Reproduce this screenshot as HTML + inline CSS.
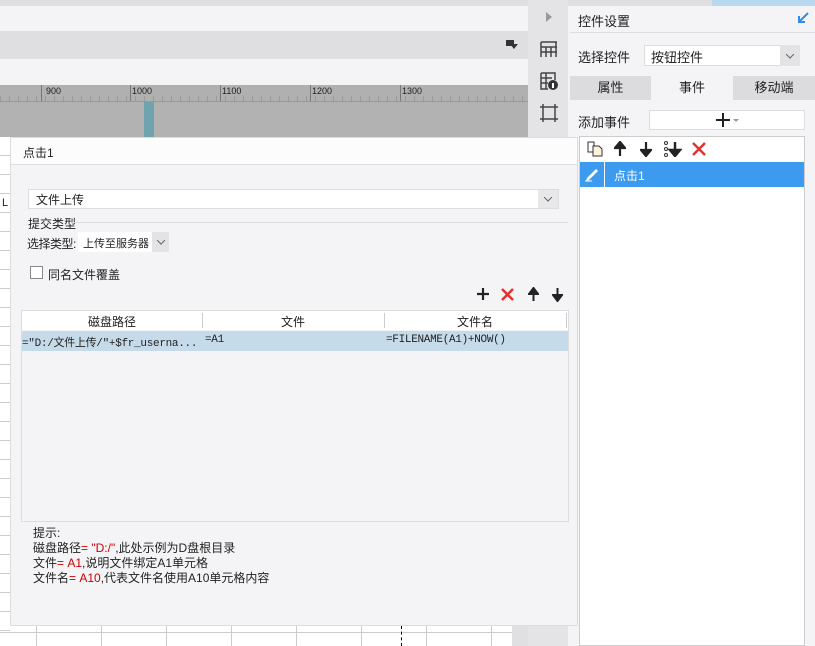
<!DOCTYPE html>
<html><head><meta charset="utf-8"><style>
*{box-sizing:border-box;margin:0;padding:0}
body{width:815px;height:646px;overflow:hidden;position:relative;background:#fff;font-family:"Liberation Sans","Noto Sans CJK SC",sans-serif;font-size:12px;color:#222}
.a{position:absolute}
.mono{font-family:"Liberation Mono","Noto Sans CJK SC",monospace;letter-spacing:-0.3px}
.chev{position:absolute;background:#e3e3e5}
.chev:after{content:"";position:absolute;left:50%;top:50%;width:5px;height:5px;border-right:1px solid #666;border-bottom:1px solid #666;transform:translate(-50%,-75%) rotate(45deg)}
</style></head><body>
<div class="a" style="left:0;top:0;width:528px;height:6px;background:#e0e0e2"></div>
<div class="a" style="left:0;top:6px;width:528px;height:25px;background:#f4f4f6"></div>
<div class="a" style="left:0;top:31px;width:528px;height:28px;background:#dfdfe1"></div>
<div class="a" style="left:506px;top:40px;width:8px;height:6px;background:#333"></div>
<div class="a" style="left:510px;top:44px;border:4px solid transparent;border-top:5px solid #333"></div>
<div class="a" style="left:0;top:59px;width:528px;height:26px;background:#f4f4f6"></div>
<div class="a" style="left:0;top:85px;width:528px;height:17px;background:#b0b0b0;border-bottom:1px solid #999"></div>
<div class="a" style="left:0;top:102px;width:528px;height:35px;background:#b2b2b2"></div>
<div class="a" style="left:144px;top:102px;width:10px;height:35px;background:#6fa3ae"></div>
<div class="a" style="left:41px;top:85px;height:16px;border-left:1px solid #777"></div><div class="a" style="left:46px;top:86px;font-size:9px">900</div>
<div class="a" style="left:130px;top:85px;height:16px;border-left:1px solid #777"></div><div class="a" style="left:132px;top:86px;font-size:9px">1000</div>
<div class="a" style="left:220px;top:85px;height:16px;border-left:1px solid #777"></div><div class="a" style="left:222px;top:86px;font-size:9px">1100</div>
<div class="a" style="left:310px;top:85px;height:16px;border-left:1px solid #777"></div><div class="a" style="left:312px;top:86px;font-size:9px">1200</div>
<div class="a" style="left:400px;top:85px;height:16px;border-left:1px solid #777"></div><div class="a" style="left:402px;top:86px;font-size:9px">1300</div>
<div class="a" style="left:0;top:96px;width:528px;height:5px;background:repeating-linear-gradient(90deg,#999 0 1px,transparent 1px 9px)"></div>
<div class="a" style="left:0;top:137px;width:10px;height:509px;background:repeating-linear-gradient(180deg,transparent 0 18px,#ccc 18px 19px)"></div>
<div class="a" style="left:2px;top:197px;font-size:11px">L</div>
<div class="a" style="left:0;top:626px;width:512px;height:20px;background:repeating-linear-gradient(90deg,transparent 0 36px,#ccc 36px 37px,transparent 37px 65px)"></div>
<div class="a" style="left:0;top:632px;width:512px;height:1px;background:#ccc"></div>
<div class="a" style="left:401px;top:626px;height:20px;border-left:1px dashed #000"></div>
<div class="a" style="left:512px;top:626px;width:16px;height:20px;background:#e0e0e2"></div>
<div class="a" style="left:528px;top:0;width:40px;height:646px;background:#e4e4e6"></div>
<div class="a" style="left:568px;top:0;width:10px;height:646px;background:#f4f4f6"></div>
<div class="a" style="left:546px;top:12px;border:5px solid transparent;border-left:6px solid #999;border-right:0"></div>
<svg class="a" style="left:540px;top:40px" width="18" height="18"><path d="M1 2H17M1 2V17M1 7H17M6 7V17M11 7V17M16 2V17M1 12H17" stroke="#444" stroke-width="1.5" fill="none"/></svg>
<svg class="a" style="left:540px;top:72px" width="18" height="18"><path d="M1 1H15V8M1 1V17H8M1 6H12M1 11H8M6 1V17" stroke="#444" stroke-width="1.5" fill="none"/><circle cx="13" cy="13" r="5" fill="#333"/><rect x="12" y="11" width="2" height="5" fill="#fff"/></svg>
<svg class="a" style="left:540px;top:104px" width="18" height="18"><path d="M0 3H18M0 15H18M3 0V18M15 0V18" stroke="#444" stroke-width="1.5" fill="none"/></svg>
<div class="a" style="left:568px;top:0;width:247px;height:6px;background:#e0e0e2"></div>
<div class="a" style="left:712px;top:0;width:103px;height:6px;background:#b9d9ef"></div>
<div class="a" style="left:570px;top:6px;width:245px;height:640px;background:#f4f4f6"></div>
<div class="a" style="left:570px;top:32px;width:245px;height:1px;background:#ddd"></div>
<div class="a" style="left:578px;top:11px;font-size:13px">控件设置</div>
<svg class="a" style="left:797px;top:12px" width="12" height="12"><path d="M11 1L2 10M2 4V10H8" stroke="#2f8ee6" stroke-width="2" fill="none"/></svg>
<div class="a" style="left:578px;top:47px;font-size:13px">选择控件</div>
<div class="a" style="left:644px;top:45px;width:156px;height:21px;background:#fff;border:1px solid #ddd"></div>
<div class="a" style="left:651px;top:47px;font-size:13px">按钮控件</div>
<div class="chev" style="left:780px;top:45px;width:20px;height:21px"></div>
<div class="a" style="left:570px;top:76px;width:81px;height:24px;background:#dcdcde;text-align:center;line-height:24px;font-size:13px">属性</div>
<div class="a" style="left:651px;top:76px;width:82px;height:24px;background:#f4f4f6;text-align:center;line-height:24px;font-size:13px">事件</div>
<div class="a" style="left:733px;top:76px;width:82px;height:24px;background:#dcdcde;text-align:center;line-height:24px;font-size:13px">移动端</div>
<div class="a" style="left:578px;top:112px;font-size:13px">添加事件</div>
<div class="a" style="left:649px;top:110px;width:156px;height:20px;background:#fff;border:1px solid #ddd"></div>
<svg class="a" style="left:716px;top:113px" width="24" height="14"><path d="M7 0V14M0 7H14" stroke="#222" stroke-width="2"/><path d="M17 6H23L20 9Z" fill="#999"/></svg>
<div class="a" style="left:579px;top:136px;width:226px;height:510px;background:#fff;border:1px solid #ccc"></div>
<svg class="a" style="left:587px;top:141px" width="16" height="16"><path d="M1 1H7V11H1Z" fill="#fff" stroke="#333"/><path d="M6 5H12L15 8V15H6Z" fill="#fbf3dc" stroke="#333"/></svg>
<svg class="a" style="left:614px;top:141px" width="12" height="16"><path d="M6 15V3M1 7L6 1L11 7Z" stroke="#222" stroke-width="2.2" fill="#222"/></svg>
<svg class="a" style="left:640px;top:141px" width="12" height="16"><path d="M6 1V13M1 9L6 15L11 9Z" stroke="#222" stroke-width="2.2" fill="#222"/></svg>
<svg class="a" style="left:664px;top:141px" width="18" height="16"><circle cx="2" cy="2" r="1.5" fill="none" stroke="#333"/><circle cx="2" cy="8" r="1.5" fill="none" stroke="#333"/><circle cx="2" cy="14" r="1.5" fill="none" stroke="#333"/><path d="M11 1V12M6 9L11 15L16 9Z" stroke="#222" stroke-width="2.5" fill="#222"/></svg>
<svg class="a" style="left:692px;top:142px" width="14" height="14"><path d="M1 1L13 13M13 1L1 13" stroke="#e5322d" stroke-width="2.5"/></svg>
<div class="a" style="left:580px;top:162px;width:224px;height:25px;background:#3d9bef"></div>
<div class="a" style="left:604px;top:162px;width:1px;height:25px;background:#fff"></div>
<svg class="a" style="left:584px;top:166px" width="16" height="16"><path d="M3 12L12 3L14 5L5 14L2 15Z" fill="#fff"/><path d="M1 15H8" stroke="#fff"/></svg>
<div class="a" style="left:614px;top:167px;font-size:12px;color:#fff">点击1</div>
<div class="a" style="left:10px;top:137px;width:568px;height:489px;background:#f4f4f6;border:1px solid #ddd"></div>
<div class="a" style="left:11px;top:138px;width:566px;height:27px;background:#fcfcfc;border-bottom:1px solid #ddd"></div>
<div class="a" style="left:23px;top:144px;font-size:12px">点击1</div>
<div class="a" style="left:28px;top:189px;width:531px;height:20px;background:#fff;border:1px solid #ddd"></div>
<div class="a" style="left:36px;top:191px;font-size:12px">文件上传</div>
<div class="chev" style="left:538px;top:190px;width:20px;height:18px;background:#e8e8ea"></div>
<div class="a" style="left:28px;top:215px;font-size:12px">提交类型</div>
<div class="a" style="left:72px;top:222px;width:496px;height:1px;background:#ddd"></div>
<div class="a" style="left:27px;top:235px;font-size:12px;letter-spacing:-0.5px">选择类型:</div>
<div class="a" style="left:78px;top:232px;width:74px;height:20px;background:#fff"></div>
<div class="a" style="left:83px;top:235px;font-size:11px">上传至服务器</div>
<div class="chev" style="left:152px;top:232px;width:17px;height:20px"></div>
<div class="a" style="left:30px;top:266px;width:13px;height:13px;border:1px solid #888;background:#fff"></div>
<div class="a" style="left:48px;top:266px;font-size:12px">同名文件覆盖</div>
<svg class="a" style="left:477px;top:288px" width="12" height="12"><path d="M6 0V12M0 6H12" stroke="#222" stroke-width="2.2"/></svg>
<svg class="a" style="left:501px;top:288px" width="13" height="13"><path d="M1 1L12 12M12 1L1 12" stroke="#e5322d" stroke-width="2.5"/></svg>
<svg class="a" style="left:528px;top:287px" width="11" height="15"><path d="M5.5 14V3M1 7L5.5 1L10 7Z" stroke="#222" stroke-width="2" fill="#222"/></svg>
<svg class="a" style="left:552px;top:287px" width="11" height="15"><path d="M5.5 1V12M1 8L5.5 14L10 8Z" stroke="#222" stroke-width="2" fill="#222"/></svg>
<div class="a" style="left:21px;top:310px;width:548px;height:212px;border:1px solid #ddd;background:#f4f4f6"></div>
<div class="a" style="left:22px;top:311px;width:546px;height:19px;background:#fff"></div>
<div class="a" style="left:22px;top:313px;width:180px;text-align:center;font-size:12px">磁盘路径</div>
<div class="a" style="left:202px;top:313px;width:182px;text-align:center;font-size:12px">文件</div>
<div class="a" style="left:384px;top:313px;width:182px;text-align:center;font-size:12px">文件名</div>
<div class="a" style="left:202px;top:313px;width:1px;height:15px;background:#ccc"></div>
<div class="a" style="left:384px;top:313px;width:1px;height:15px;background:#ccc"></div>
<div class="a" style="left:566px;top:313px;width:1px;height:15px;background:#ccc"></div>
<div class="a" style="left:22px;top:331px;width:546px;height:20px;background:#c6dbe9"></div>
<div class="a mono" style="left:22px;top:334px;font-size:11px">="D:/文件上传/"+$fr_userna...</div>
<div class="a mono" style="left:205px;top:334px;font-size:11px">=A1</div>
<div class="a mono" style="left:386px;top:334px;font-size:11px">=FILENAME(A1)+NOW()</div>
<div class="a" style="left:33px;top:526px;font-size:12px;line-height:15px">提示:<br>磁盘路径<span style="color:#c00">= "D:/"</span>,此处示例为D盘根目录<br>文件<span style="color:#c00">= A1</span>,说明文件绑定A1单元格<br>文件名<span style="color:#c00">= A10</span>,代表文件名使用A10单元格内容</div>
</body></html>
